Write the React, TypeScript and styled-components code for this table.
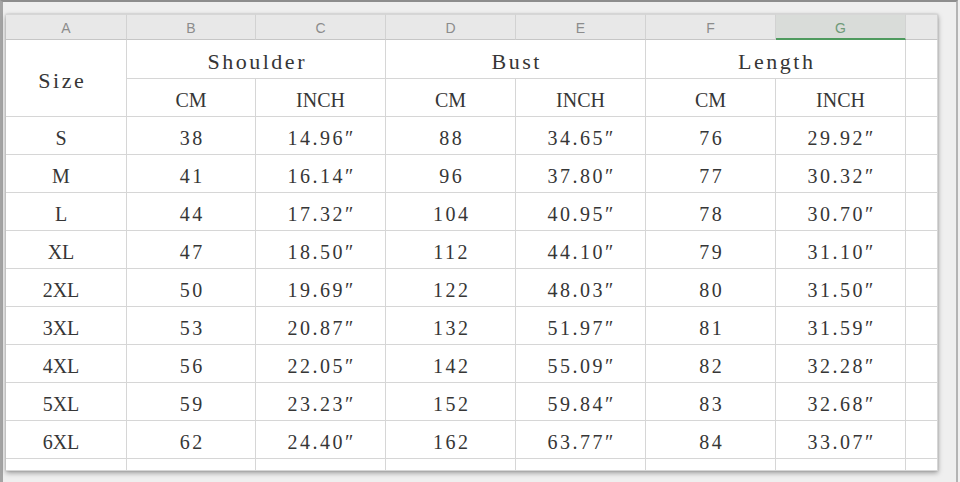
import React from 'react'
import styled, { createGlobalStyle } from 'styled-components'

//-----------------------------------------------------------------------------------------------
// data
//-----------------------------------------------------------------------------------------------
const letters = ['A', 'B', 'C', 'D', 'E', 'F', 'G']

const rows: string[][] = [
  ['S', '38', '14.96″', '88', '34.65″', '76', '29.92″'],
  ['M', '41', '16.14″', '96', '37.80″', '77', '30.32″'],
  ['L', '44', '17.32″', '104', '40.95″', '78', '30.70″'],
  ['XL', '47', '18.50″', '112', '44.10″', '79', '31.10″'],
  ['2XL', '50', '19.69″', '122', '48.03″', '80', '31.50″'],
  ['3XL', '53', '20.87″', '132', '51.97″', '81', '31.59″'],
  ['4XL', '56', '22.05″', '142', '55.09″', '82', '32.28″'],
  ['5XL', '59', '23.23″', '152', '59.84″', '83', '32.68″'],
  ['6XL', '62', '24.40″', '162', '63.77″', '84', '33.07″'],
]

const GlobalStyle = createGlobalStyle`
  html, body {
    margin: 0;
    padding: 0;
    background: #f0f0f0;
  }
`

//-----------------------------------------------------------------------------------------------
// styles
//-----------------------------------------------------------------------------------------------
const Frame = styled.div`
  box-sizing: border-box;
  width: 958px;
  height: 482px;
  background: #efefef;
  border-top: 2px solid #8e8e8e;
  border-left: 3px solid #a4a4a4;
  border-right: 2px solid #b4b4b4;
  padding: 12px 0 0 3px;
`

const Sheet = styled.div`
  display: grid;
  grid-template-columns: 121px 129px 130px 130px 130px 130px 130px 32px;
  grid-template-rows: 26px 39px 38px repeat(9, 38px) 12px;
  width: 932px;
  background: #fff;
  box-shadow: 0 2px 5px rgba(0, 0, 0, 0.35), 0 0 2px rgba(0, 0, 0, 0.15);
  font-family: "Liberation Serif", "Times New Roman", serif;
  color: #363636;
`

const ColHead = styled.div<{ $selected?: boolean }>`
  box-sizing: border-box;
  display: flex;
  align-items: center;
  justify-content: center;
  padding-top: 2px;
  background: ${p => (p.$selected ? '#d9dcd9' : '#e8e8e8')};
  border-top: 1px solid #d6d6d6;
  border-right: 1px solid #d2d2d2;
  border-bottom: ${p => (p.$selected ? '2px solid #4e9a5e' : '1px solid #c6c6c6')};
  font-family: "Liberation Sans", Arial, sans-serif;
  font-size: 14px;
  color: ${p => (p.$selected ? '#6f9a78' : '#8c8c8c')};
`

type Kind = 'word' | 'num' | 'plain'

const spacing: Record<Kind, number> = { word: 2.5, num: 2.5, plain: 0 }
const sizes: Record<Kind, number> = { word: 22, num: 20, plain: 20 }

const Cell = styled.div<{ $cols?: number; $rows?: number; $shift?: number; $kind?: Kind }>`
  box-sizing: border-box;
  grid-column: span ${p => p.$cols || 1};
  grid-row: span ${p => p.$rows || 1};
  display: flex;
  align-items: center;
  justify-content: center;
  padding-top: 6px;
  padding-right: ${p => p.$shift || 0}px;
  padding-left: ${p => spacing[p.$kind || 'plain']}px;
  border-right: 1px solid #d6d6d6;
  border-bottom: 1px solid #d6d6d6;
  font-size: ${p => sizes[p.$kind || 'plain']}px;
  letter-spacing: ${p => spacing[p.$kind || 'plain']}px;
  white-space: nowrap;
`

//-----------------------------------------------------------------------------------------------
// App
//-----------------------------------------------------------------------------------------------
const App: React.FunctionComponent = () => {
  return (
    <Frame>
      <GlobalStyle />
      <Sheet>
        {letters.map(l => (
          <ColHead key={l} $selected={l === 'G'}>{l}</ColHead>
        ))}
        <ColHead />

        <Cell $rows={2} $shift={10} $kind="word">Size</Cell>
        <Cell $cols={2} $kind="word">Shoulder</Cell>
        <Cell $cols={2} $kind="word">Bust</Cell>
        <Cell $cols={2} $kind="word">Length</Cell>
        <Cell />
        {['CM', 'INCH', 'CM', 'INCH', 'CM', 'INCH'].map((u, i) => (
          <Cell key={i}>{u}</Cell>
        ))}
        <Cell />

        {rows.map(r => (
          <React.Fragment key={r[0]}>
            {r.map((v, i) => (
              <Cell key={i} $shift={i === 0 ? 10 : 0} $kind={i === 0 ? 'plain' : 'num'}>{v}</Cell>
            ))}
            <Cell />
          </React.Fragment>
        ))}

        {Array.from({ length: 8 }).map((_, i) => (
          <Cell key={'e' + i} />
        ))}
      </Sheet>
    </Frame>
  )
}

export default App
